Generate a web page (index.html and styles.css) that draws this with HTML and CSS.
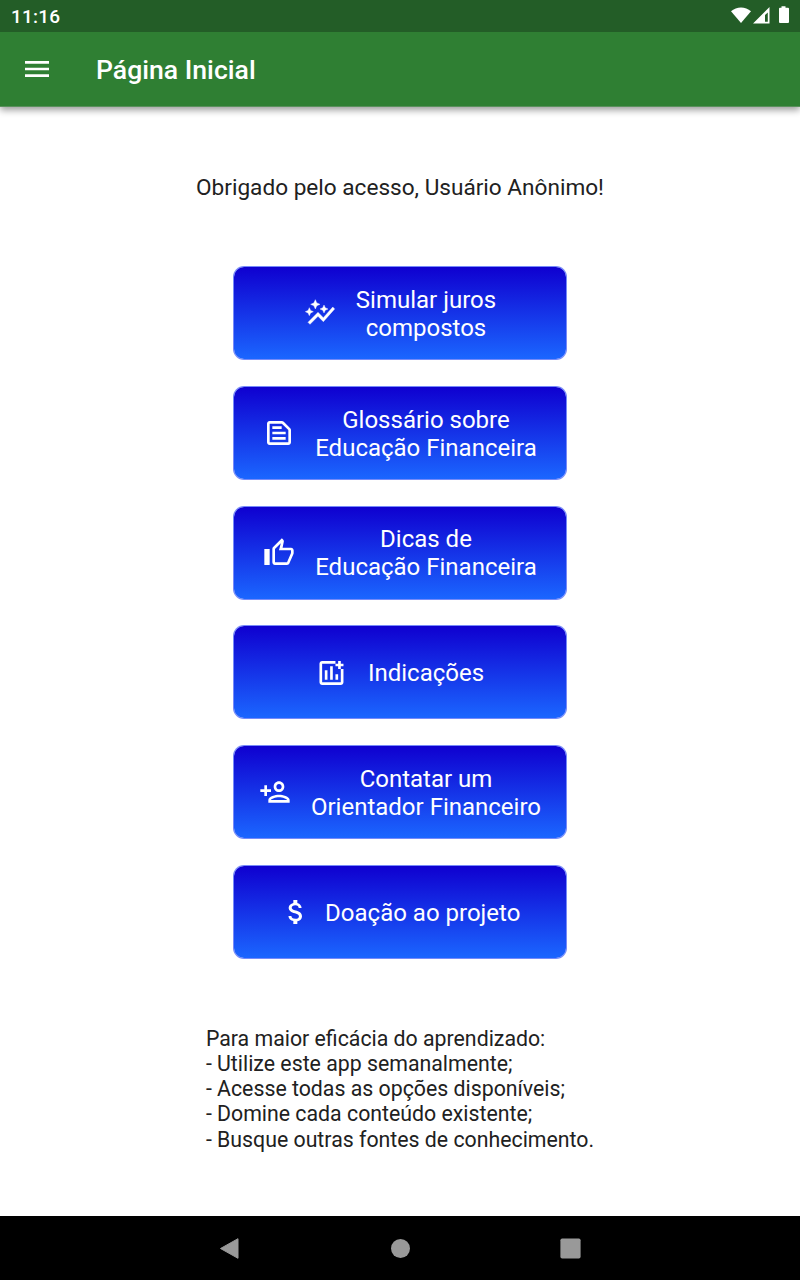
FILE: index.html
```html
<!DOCTYPE html>
<html lang="pt-BR">
<head>
<meta charset="utf-8">
<title>Página Inicial</title>
<link rel="stylesheet" href="styles.css">
</head>
<body>
<div class="screen">
  <div class="status">
    <span class="clock">11:16</span>
    <svg class="status-icons" width="60" height="18" viewBox="0 0 60 18" fill="#fff">
      <path d="M1 4.200C6.500-.9 15.500-.9 21 4.200L11 16z"/>
      <path fill-rule="evenodd" d="M39.500 0v16.500H23zM37.800 5.500L35 8v6.800h2.800z"/>
      <path d="M51.500-.8h4v1.500h2.500q1 0 1 1v13.300q0 1-1 1h-8q-1 0-1-1V1.700q0-1 1-1h1.500z"/>
    </svg>
  </div>
  <header class="appbar">
    <svg class="menu" width="32" height="32" viewBox="0 0 24 24" fill="#fff"><path d="M3 18h18v-2H3v2zm0-5h18v-2H3v2zm0-7v2h18V6H3z"/></svg>
    <h1 class="title">Página Inicial</h1>
  </header>
  <main class="content">
    <p class="welcome">Obrigado pelo acesso, Usuário Anônimo!</p>
    <nav class="actions">
      <button class="action">
        <svg class="icon sparkle" viewBox="0 0 24 24"><path d="M14.060 9.940L12 9l2.060-.94L15 6l.94 2.060L18 9l-2.060.94L15 12l-.94-2.060zM4 14l.94-2.060L7 11l-2.060-.94L4 8l-.94 2.060L1 11l2.060.94L4 14zm4.500-5l1.090-2.410L12 5.500 9.590 4.410 8.500 2 7.410 4.410 5 5.500l2.410 1.090L8.500 9zm-4 11.500l6-6.010 4 4L23 8.930l-1.410-1.410-7.090 7.970-4-4L3 19l1.500 1.500z"/></svg>
        <span class="label">Simular juros<br>compostos</span>
      </button>
      <button class="action">
        <svg class="icon" viewBox="0 0 24 24"><path d="M14.170 5L19 9.830V19H5V5h9.170m0-2H5c-1.100 0-2 .9-2 2v14c0 1.100.9 2 2 2h14c1.100 0 2-.9 2-2V9.830c0-.53-.21-1.040-.59-1.410l-4.830-4.830c-.37-.38-.88-.59-1.410-.59zM7 15h10v2H7v-2zm0-4h10v2H7v-2zm0-4h7v2H7V7z"/></svg>
        <span class="label">Glossário sobre<br>Educação Financeira</span>
      </button>
      <button class="action">
        <svg class="icon" viewBox="0 0 24 24"><path d="M9 21h9c.83 0 1.540-.5 1.840-1.220l3.020-7.050c.09-.23.14-.47.14-.73v-2c0-1.100-.9-2-2-2h-6.310l.95-4.570.03-.32c0-.41-.17-.79-.44-1.060L14.170 1 7.580 7.590C7.220 7.950 7 8.450 7 9v10c0 1.100.9 2 2 2zM9 9l4.340-4.340L12 10h9v2l-3 7H9V9zM1 9h4v12H1z"/></svg>
        <span class="label">Dicas de<br>Educação Financeira</span>
      </button>
      <button class="action">
        <svg class="icon" viewBox="0 0 24 24"><path d="M19 19H5V5h10V3H5c-1.100 0-2 .9-2 2v14c0 1.100.9 2 2 2h14c1.100 0 2-.9 2-2V9h-2v10zM11 7h2v10h-2zM15 13h2v4h-2zM7 10h2v7H7zM19 5V3h-2v2h-2v2h2v2h2V7h2V5z" transform="translate(-.4 0)"/></svg>
        <span class="label">Indicações</span>
      </button>
      <button class="action">
        <svg class="icon" viewBox="0 0 24 24"><path d="M15 12c2.210 0 4-1.790 4-4s-1.790-4-4-4-4 1.790-4 4 1.790 4 4 4zm0-6c1.100 0 2 .9 2 2s-.9 2-2 2-2-.9-2-2 .9-2 2-2zm0 8c-2.670 0-8 1.340-8 4v2h16v-2c0-2.660-5.330-4-8-4zm-6 4c.22-.72 3.310-2 6-2 2.700 0 5.800 1.290 6 2H9zm-3-3v-3h3v-2H6V7H4v3H1v2h3v3z"/></svg>
        <span class="label">Contatar um<br>Orientador Financeiro</span>
      </button>
      <button class="action action-tight">
        <svg class="icon" viewBox="0 0 24 24"><path d="M11.800 10.900c-2.270-.59-3-1.200-3-2.150 0-1.090 1.010-1.850 2.700-1.850 1.780 0 2.440.85 2.500 2.100h2.210c-.07-1.720-1.120-3.300-3.210-3.810V3h-3v2.160c-1.940.42-3.500 1.680-3.500 3.610 0 2.310 1.910 3.460 4.700 4.130 2.500.6 3 1.480 3 2.410 0 .69-.49 1.790-2.700 1.790-2.060 0-2.870-.92-2.980-2.100h-2.200c.12 2.190 1.760 3.420 3.680 3.830V21h3v-2.150c1.950-.37 3.500-1.500 3.500-3.550 0-2.840-2.430-3.810-4.700-4.400z"/></svg>
        <span class="label">Doação ao projeto</span>
      </button>
    </nav>
    <p class="tips">Para maior eficácia do aprendizado:<br>- Utilize este app semanalmente;<br>- Acesse todas as opções disponíveis;<br>- Domine cada conteúdo existente;<br>- Busque outras fontes de conhecimento.</p>
  </main>
  <footer class="navbar">
    <svg width="24" height="24" viewBox="0 0 24 24" fill="#999" stroke="#999" stroke-linejoin="round"><path d="M2.500 12.500L20 2.700v19.600z"/></svg>
    <svg width="24" height="24" viewBox="0 0 24 24" fill="#999"><circle cx="12.500" cy="12.500" r="9.500"/></svg>
    <svg width="24" height="24" viewBox="0 0 24 24" fill="#999"><rect x="2.400" y="2.400" width="20.200" height="20.200" rx="1.800"/></svg>
  </footer>
</div>
</body>
</html>
```
FILE: styles.css
```css
* { box-sizing: border-box; }
body { margin: 0; font-family: Roboto, sans-serif; }
.screen { width: 800px; height: 1280px; display: flex; flex-direction: column; background: #fff; overflow: hidden; }
.status { height: 32px; flex: none; background: #235d27; display: flex; justify-content: space-between; align-items: flex-start; padding: 7px 10px 0 11px; color: #fff; position: relative; z-index: 1; }
.status-icons { overflow: visible; }
.clock { font-size: 19px; line-height: 20px; font-weight: 500; letter-spacing: .2px; }
.appbar { height: 75px; flex: none; background: #2f7f33; border-bottom: 1px solid #5a905d; display: flex; align-items: center; padding-left: 21px; gap: 43px; box-shadow: 0 3px 7px rgba(0,0,0,.4); color: #fff; }
.title { margin: 0; padding-top: 2px; font-size: 26.600px; font-weight: 500; line-height: 32px; }
.content { flex: 1; display: flex; flex-direction: column; align-items: center; }
.welcome { margin: 67px 0 0; font-size: 22.600px; line-height: 28px; color: #212121; white-space: nowrap; }
.actions { margin-top: 64px; display: flex; flex-direction: column; gap: 25.800px; }
.action { width: 334px; height: 94px; border: 1px solid rgba(27,60,245,.6); border-radius: 11px; background: linear-gradient(#0f00d0, #1b66ff) padding-box; display: flex; align-items: center; justify-content: center; gap: 20px; padding: 0; color: #fff; font-family: inherit; font-size: 24px; line-height: 28px; }
.action-tight { gap: 13.500px; }
.icon { width: 32px; height: 32px; margin-top: .6px; fill: #fff; flex: none; }
.sparkle { stroke: #fff; stroke-width: .3; }
.label { text-align: center; white-space: nowrap; padding-top: 1.800px; }
.tips { margin: 67px 0 0; font-size: 21.300px; line-height: 25.150px; color: #212121; white-space: nowrap; }
.navbar { height: 64px; flex: none; background: #000; display: flex; align-items: center; justify-content: center; gap: 146px; }
```
